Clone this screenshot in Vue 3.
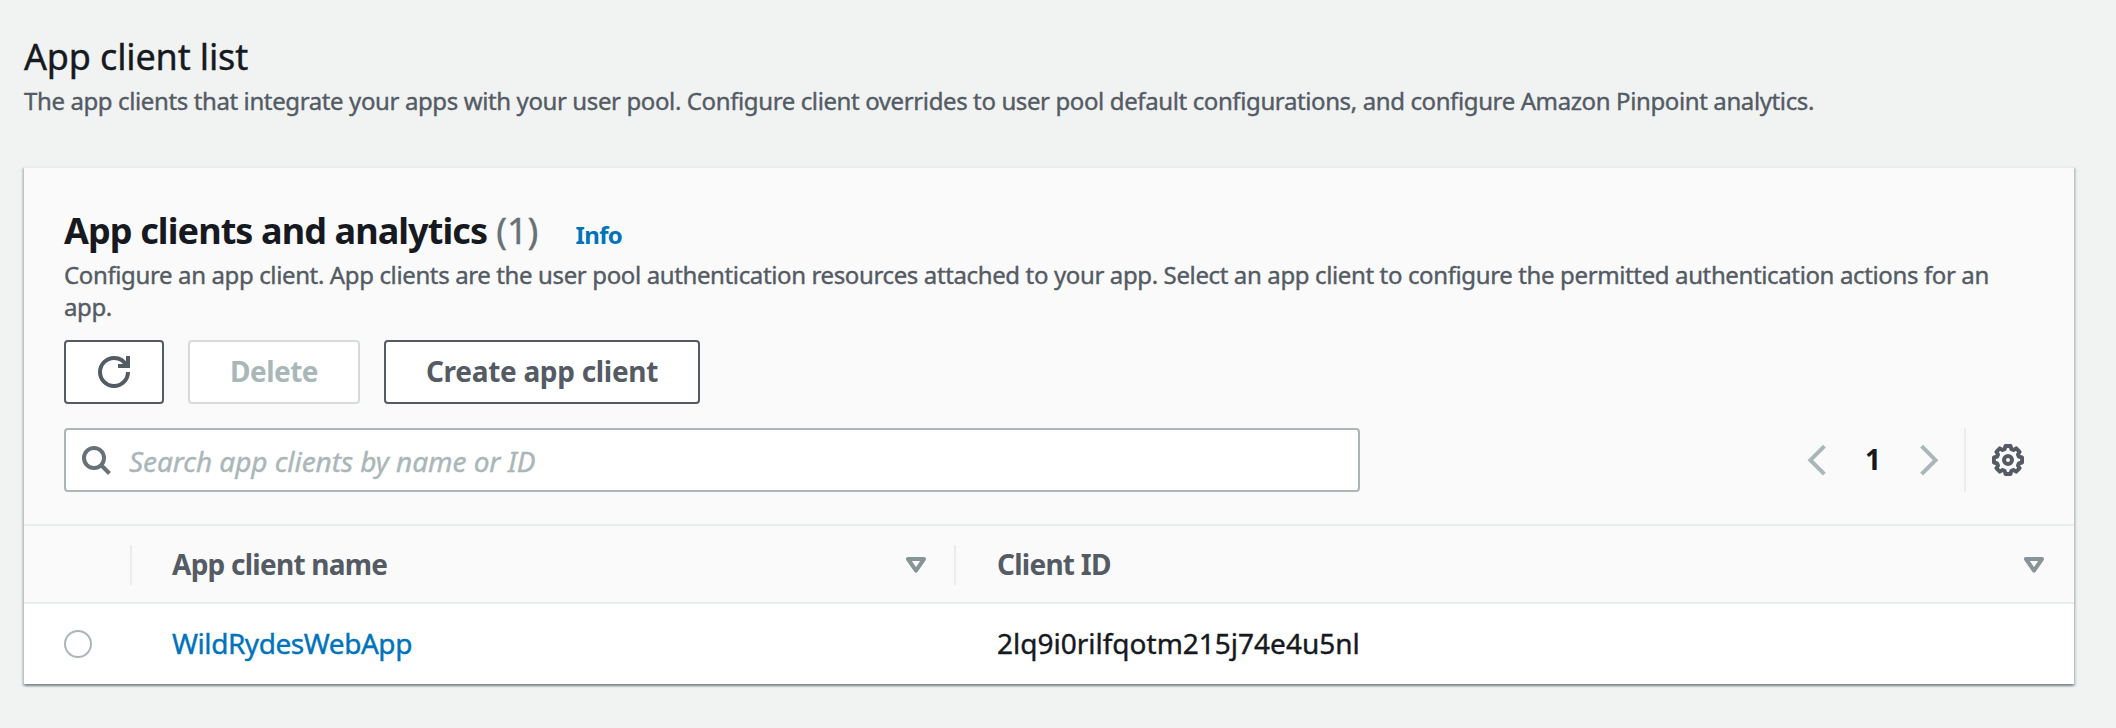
<script setup>
import { ref } from 'vue'

const query = ref('')
const selected = ref('')
const clients = [{ name: 'WildRydesWebApp', id: '2lq9i0rilfqotm215j74e4u5nl' }]
</script>

<template>
  <main class="page">
    <h1 class="title">App client list</h1>
    <p class="lead">The app clients that integrate your apps with your user pool. Configure client overrides to user pool default configurations, and configure Amazon Pinpoint analytics.</p>

    <section class="card">
      <header class="card-head">
        <div class="heading">
          <h2>App clients and analytics</h2>
          <span class="count">(1)</span>
          <a class="info">Info</a>
        </div>
        <p class="desc">Configure an app client. App clients are the user pool authentication resources attached to your app. Select an app client to configure the permitted authentication actions for an app.</p>

        <div class="actions">
          <button class="btn refresh" aria-label="Refresh">
            <svg width="32" height="32" viewBox="0 0 16 16" fill="none" stroke="currentColor" stroke-width="2">
              <path d="M15 8A7 7 0 1 1 8 1C10.9 1 13.2 2.6 14.3 5" />
              <path d="M15 0V5H10" />
            </svg>
          </button>
          <button class="btn delete" disabled>Delete</button>
          <button class="btn create">Create app client</button>
        </div>

        <div class="tools">
          <label class="search">
            <svg width="32" height="32" viewBox="0 0 32 32" fill="none" stroke="currentColor" stroke-width="4">
              <circle cx="14" cy="14" r="10" />
              <path d="M21 21L29.5 29.5" />
            </svg>
            <input v-model="query" placeholder="Search app clients by name or ID" />
          </label>
          <nav class="pager">
            <svg width="20" height="32" viewBox="0 0 20 32" fill="none" stroke="#aab7b8" stroke-width="4">
              <path d="M17.4 2.2L3.4 16.2L17.4 30.2" />
            </svg>
            <span class="page-no">1</span>
            <svg width="20" height="32" viewBox="0 0 20 32" fill="none" stroke="#aab7b8" stroke-width="4">
              <path d="M2.6 2.2L16.6 16.2L2.6 30.2" />
            </svg>
          </nav>
          <span class="split"></span>
          <svg class="gear" width="32" height="32" viewBox="0 0 32 32" fill="none" stroke="#545b64" stroke-width="4" stroke-linejoin="round">
            <path d="M13.5 2H18.5L19.4 5.2L21.4 6L24.2 4.4L27.6 7.8L26 10.6L26.8 12.6L30 13.5V18.5L26.8 19.4L26 21.4L27.6 24.2L24.2 27.6L21.4 26L19.4 26.8L18.5 30H13.5L12.6 26.8L10.6 26L7.8 27.6L4.4 24.2L6 21.4L5.2 19.4L2 18.5V13.5L5.2 12.6L6 10.6L4.4 7.8L7.8 4.4L10.6 6L12.6 5.2Z" />
            <circle cx="16" cy="16" r="4" />
          </svg>
        </div>
      </header>

      <div class="row head">
        <div class="cell pick"></div>
        <div class="cell">
          <span class="label">App client name</span>
          <svg class="sort" width="20" height="16" viewBox="0 0 20 16" fill="none" stroke="#879596" stroke-width="4" stroke-linejoin="round">
            <path d="M2 2H18L10 13.6Z" />
          </svg>
        </div>
        <div class="cell">
          <span class="label">Client ID</span>
          <svg class="sort" width="20" height="16" viewBox="0 0 20 16" fill="none" stroke="#879596" stroke-width="4" stroke-linejoin="round">
            <path d="M2 2H18L10 13.6Z" />
          </svg>
        </div>
      </div>
      <div v-for="c in clients" :key="c.id" class="row body">
        <div class="cell pick"><input v-model="selected" type="radio" :value="c.id" /></div>
        <div class="cell"><a class="link">{{ c.name }}</a></div>
        <div class="cell"><span class="id">{{ c.id }}</span></div>
      </div>
    </section>
  </main>
</template>

<style>
body { background: #f1f3f3; }
</style>

<style scoped>
.page {
  box-sizing: border-box;
  min-height: 728px;
  padding: 35px 42px 44px 24px;
  color: #16191f;
  font-family: "Noto Sans", "Open Sans", sans-serif;
  font-size: 28px;
}
h1, h2, p { margin: 0; }
.title { font-size: 36px; line-height: 44px; font-weight: 400; letter-spacing: -0.15px; }
.lead, .desc { color: #545b64; font-size: 24px; line-height: 32px; }
.title, .lead, .desc, .count, .link, .id, .search input { -webkit-text-stroke: 0.4px; }
.lead { margin-top: 6px; letter-spacing: -0.386px; }
.desc { margin-top: 6px; letter-spacing: -0.372px; }
.card {
  margin-top: 49px;
  border-top: 2px solid #eaeded;
  background: #fff;
  box-shadow: 0 2px 2px 0 rgba(0, 28, 36, 0.3), 2px 2px 2px 0 rgba(0, 28, 36, 0.15), -2px 2px 2px 0 rgba(0, 28, 36, 0.15);
}
.card-head { padding: 41px 50px 32px 40px; background: #fafafa; }
.heading { display: flex; align-items: baseline; height: 44px; font-size: 36px; line-height: 44px; }
h2 { font-size: 36px; font-weight: 700; letter-spacing: -0.9px; }
.count { margin-left: 9px; color: #687078; }
.info { margin-left: 37px; color: #0073bb; font-size: 24px; line-height: 32px; font-weight: 700; letter-spacing: -0.6px; }
.actions { display: flex; gap: 24px; margin-top: 17px; }
.btn {
  box-sizing: border-box;
  display: flex;
  align-items: center;
  justify-content: center;
  height: 64px;
  padding: 0 0 2px;
  border: 2px solid #545b64;
  border-radius: 4px;
  background: #fff;
  color: #545b64;
  font: 700 28px "Noto Sans", "Open Sans", sans-serif;
}
.refresh { width: 100px; padding: 0; }
.delete { width: 172px; border-color: #d5dbdb; color: #aab7b8; letter-spacing: -0.5px; }
.create { width: 316px; letter-spacing: -0.3px; }
.tools { display: flex; align-items: center; height: 64px; margin-top: 24px; }
.search {
  box-sizing: border-box;
  display: flex;
  align-items: center;
  width: 1296px;
  height: 64px;
  padding-left: 14px;
  border: 2px solid #aab7b8;
  border-radius: 4px;
  background: #fff;
  color: #687078;
}
.search input {
  flex: 1;
  margin-left: 17px;
  padding: 2px 0 0;
  border: 0;
  outline: 0;
  background: transparent;
  font: 28px "Noto Sans", "Open Sans", sans-serif;
  letter-spacing: -0.06px;
}
.search input::placeholder { color: #aab7b8; font-style: italic; opacity: 1; }
.pager { display: flex; align-items: center; justify-content: space-between; width: 132px; margin-left: auto; }
.page-no { padding-bottom: 2px; font-size: 28px; line-height: 36px; font-weight: 700; }
.split { width: 2px; height: 64px; margin: 0 26px 0 25px; background: #eaeded; }
.row { display: grid; grid-template-columns: 108px 824px 1fr; }
.head { height: 76px; border-top: 2px solid #eaeded; border-bottom: 2px solid #eaeded; background: #fafafa; color: #545b64; font-weight: 700; }
.body { height: 80px; }
.cell { box-sizing: border-box; display: flex; align-items: center; justify-content: space-between; padding: 0 30px 2px 40px; }
.cell:last-child { padding-left: 41px; }
.head .cell { margin: 19px 0; border-right: 2px solid #eaeded; padding-right: 28px; }
.head .cell:last-child { border-right: 0; padding-right: 30px; }
.head .label { letter-spacing: -0.75px; }
.sort { margin-top: 2px; }
.link { color: #0073bb; letter-spacing: -0.45px; }
.pick input {
  appearance: none;
  box-sizing: border-box;
  width: 28px;
  height: 28px;
  margin: 2px 0 0;
  border: 2px solid #aab7b8;
  border-radius: 50%;
  background: #fff;
}
</style>
